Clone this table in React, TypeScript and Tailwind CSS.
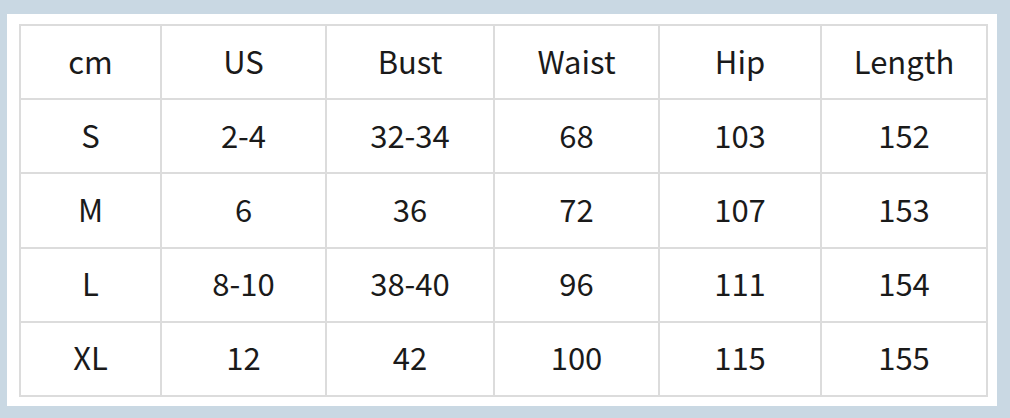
import React from "react";

const headers = ["cm", "US", "Bust", "Waist", "Hip", "Length"];

const rows = [
  ["S", "2-4", "32-34", "68", "103", "152"],
  ["M", "6", "36", "72", "107", "153"],
  ["L", "8-10", "38-40", "96", "111", "154"],
  ["XL", "12", "42", "100", "115", "155"],
];

const colWidths = ["w-[141px]", "w-[165px]", "w-[168px]", "w-[165px]", "w-[162px]", "w-[166px]"];

export default function App() {
  return (
    <div className="w-[1010px] h-[418px] bg-[#c9d8e3] pl-[7px] pr-[13px] pt-[14px] pb-[12px]">
      <div className="w-full h-full bg-white pl-[12px] pr-[11px] pt-[10px] pb-[9px]">
        <table
          className="w-full h-full border-collapse table-fixed text-[#1a1a1a] text-[31px] leading-none"
          style={{ fontFamily: '"Noto Sans CJK SC", "Noto Sans", sans-serif' }}
        >
          <colgroup>
            {colWidths.map((w, i) => (
              <col key={i} className={w} />
            ))}
          </colgroup>
          <thead>
            <tr className="h-[74px]">
              {headers.map((h) => (
                <th key={h} className="border-2 border-[#dcdcdc] font-normal text-center align-middle pb-[4px]">
                  {h}
                </th>
              ))}
            </tr>
          </thead>
          <tbody>
            {rows.map((r) => (
              <tr key={r[0]} className="h-[74px]">
                {r.map((c, i) => (
                  <td key={i} className="border-2 border-[#dcdcdc] text-center align-middle pb-[4px]">
                    {c}
                  </td>
                ))}
              </tr>
            ))}
          </tbody>
        </table>
      </div>
    </div>
  );
}
